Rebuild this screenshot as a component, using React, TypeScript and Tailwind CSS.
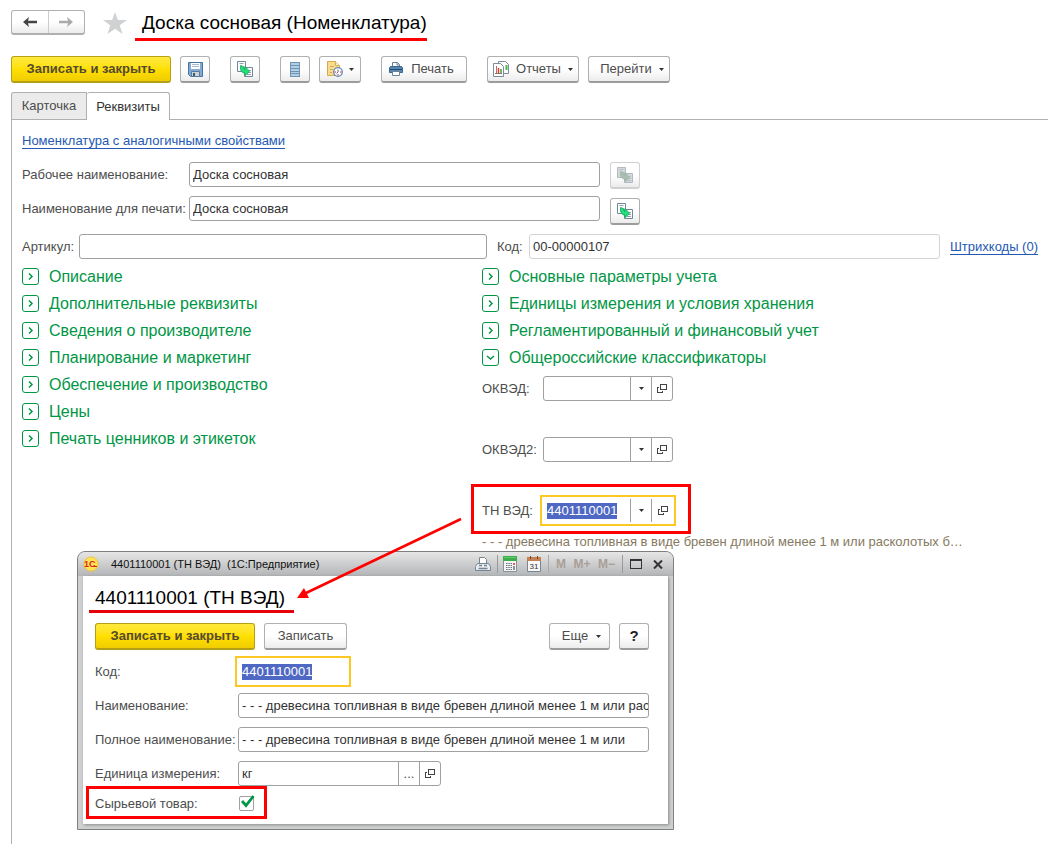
import { useState, type ReactNode } from "react";

const leftGroups = [
  "Описание",
  "Дополнительные реквизиты",
  "Сведения о производителе",
  "Планирование и маркетинг",
  "Обеспечение и производство",
  "Цены",
  "Печать ценников и этикеток",
];

const rightGroups = [
  "Основные параметры учета",
  "Единицы измерения и условия хранения",
  "Регламентированный и финансовый учет",
];

const inputClass =
  "h-[25px] min-w-0 rounded-[3px] border border-[#a0a0a0] bg-white pl-[3px] text-[#333] outline-none";

function Caret() {
  return (
    <svg width="5" height="3" viewBox="0 0 5 3" className="shrink-0">
      <path d="M0 0h5L2.500 3z" fill="#333" />
    </svg>
  );
}

function OpenIcon() {
  return (
    <svg width="10" height="10" viewBox="0 0 10 10" fill="none" stroke="#444" shapeRendering="crispEdges">
      <path d="M3.500.5h6v5h-6zM2 3.500H.5v5h5V7" />
    </svg>
  );
}

function ArrowIcon({ color, flip }: { color: string; flip?: boolean }) {
  return (
    <svg width="14" height="10" viewBox="0 0 14 10" className={flip ? "rotate-180" : ""}>
      <path d="M0 5l6-5-1 3.700h9v2.600H5L6 10z" fill={color} />
    </svg>
  );
}

function SaveIcon() {
  return (
    <svg width="15" height="15" viewBox="0 0 15 15">
      <path d="M.5.5h14v14h-12l-2-2z" fill="#83aad6" stroke="#4475a5" />
      <path d="M3 1h9v6H3z" fill="#fff" />
      <path d="M4 2.500h7M4 4.500h7" stroke="#a9bccb" />
      <path d="M3.500 9.500h8v5h-8z" fill="#cfd3d0" stroke="#557a9c" />
      <path d="M5 11h2v3H5z" fill="#35597c" />
    </svg>
  );
}

function CopyIcon({ muted }: { muted?: boolean }) {
  const line = muted ? "#b3babf" : "#74879a";
  const paper = muted ? "#d3d8db" : "#fff";
  return (
    <svg width="16" height="16" viewBox="0 0 16 16">
      <path d="M.5.5h8v10h-8z" fill={paper} stroke={line} />
      <path d="M7.500 6.500h8v9h-8z" fill={paper} stroke={line} />
      <path d="M2.500 2.500h4M11 9.500h3M11 11.500h3M10 13.500h4" stroke={line} strokeWidth=".8" />
      <path
        d="M3.500 4.500l3 1v2l1.500.8V5.500l4.500 4.700L8 14.800v-2.600c-3-.3-4.500-2.400-4.500-5z"
        fill={muted ? "#a9bfb2" : "#21df7b"}
        stroke={muted ? "#9eb3a7" : "#0ea655"}
        strokeWidth=".8"
      />
    </svg>
  );
}

function ListIcon() {
  return (
    <svg width="10" height="15" viewBox="0 0 10 15" shapeRendering="crispEdges">
      <path d="M0 0h10v15H0z" fill="#6f93b0" />
      <path d="M1 1h8v2H1zM1 4h8v2H1zM1 7h8v2H1zM1 10h8v1H1zM1 12h8v2H1z" fill="#b0cfe4" />
    </svg>
  );
}

function HistoryIcon() {
  return (
    <svg width="16" height="16" viewBox="0 0 16 16">
      <path d="M.5.5h8l4 4v10h-12z" fill="#f8dc8e" stroke="#d6ab50" />
      <path d="M8.500.5v4h4" fill="#fff0c4" stroke="#d6ab50" />
      <path d="M3 5.500h4M3 8.500h3M3 11.500h2" stroke="#d1aa58" />
      <circle cx="11" cy="11" r="4.300" fill="#fff" stroke="#5b8cc0" strokeWidth="1.300" />
      <path d="M11 8.500V11l-1.500 1.500" fill="none" stroke="#345" strokeWidth=".8" />
      <path d="M13 11h1.500M7.500 11H9M11 13v1.500" stroke="#e22" />
    </svg>
  );
}

function PrintIcon() {
  return (
    <svg width="14" height="14" viewBox="0 0 14 14">
      <path d="M3.500 5V.5h5l2 2V5" fill="#fff" stroke="#6e8293" />
      <path d="M8 .5v2.500h2.500" fill="none" stroke="#6e8293" />
      <path d="M1.500 4.500h11l1 1v5h-13v-5z" fill="#5585b0" stroke="#3b668d" />
      <path d="M1 7.500h12" stroke="#244a6c" />
      <path d="M3.500 9.500h7v4h-7z" fill="#fff" stroke="#6e8293" />
    </svg>
  );
}

function ReportIcon() {
  return (
    <svg width="16" height="16" viewBox="0 0 16 16">
      <path d="M5.500.5h7l3 3v9h-10z" fill="#fff" stroke="#7d8d9b" />
      <path d="M13.500 4v5" stroke="#4db34d" strokeWidth="2" />
      <path d="M.5 2.500h7l3 3v10H.5z" fill="#fff" stroke="#7d8d9b" />
      <path d="M3.500 5v7" stroke="#c66" />
      <path d="M5.500 7v5" stroke="#e33" strokeWidth="1.500" />
      <path d="M8 8v4" stroke="#3a3" strokeWidth="1.500" />
      <path d="M2 12.500h7" stroke="#777" />
    </svg>
  );
}

function Button({ className, disabled, label, children }: {
  className?: string;
  disabled?: boolean;
  label?: string;
  children: ReactNode;
}) {
  return (
    <button
      aria-label={label}
      disabled={disabled}
      className={`flex h-[27px] shrink-0 items-center justify-center rounded-[3px] border border-b-2 bg-linear-to-b from-white from-50% to-[#ececec] ${
        disabled ? "border-[#d0d0d0]" : "border-[#b0b0b0] border-b-[#9c9c9c]"
      } ${className ?? "w-[30px]"}`}
    >
      {children}
    </button>
  );
}

function PrimaryButton() {
  return (
    <button className="h-[27px] w-40 shrink-0 rounded-[3px] border border-b-2 border-[#b59f17] bg-linear-to-b from-[#ffe939] via-[#ffe000] to-[#f0cc00] font-bold text-[#554a30]">
      Записать и закрыть
    </button>
  );
}

function Group({ title, open }: { title: string; open?: boolean }) {
  return (
    <button aria-expanded={!!open} className="flex h-[27px] items-center gap-[10px] text-base text-[#009646]">
      <svg width="17" height="17" viewBox="0 0 17 17" fill="none" stroke="#009646">
        <rect x=".5" y=".5" width="16" height="16" rx="2.500" />
        {open ? (
          <path d="M5 7l3.500 3L12 7" strokeWidth="1.500" />
        ) : (
          <path d="M7 5.500l3 3-3 3" strokeWidth="1.500" />
        )}
      </svg>
      {title}
    </button>
  );
}

function PickerField({ id, label }: { id: string; label: string }) {
  return (
    <div className="flex h-[25px] items-center">
      <label htmlFor={id} className="w-[61px] shrink-0">{label}</label>
      <div className="flex h-[25px] w-[130px] rounded-[3px] border border-[#a0a0a0]">
        <input id={id} className="min-w-0 flex-1 px-[3px] outline-none" />
        <button aria-label="Выбрать" className="flex w-[21px] items-center justify-center border-l border-[#a0a0a0]">
          <Caret />
        </button>
        <button aria-label="Открыть" className="flex w-[21px] items-center justify-center border-l border-[#a0a0a0]">
          <OpenIcon />
        </button>
      </div>
    </div>
  );
}

function TitleBar() {
  return (
    <div className="flex h-6 items-center bg-linear-to-b from-[#e6e6e6] to-[#b4b5b7] pl-[5px] pr-[10px] text-[11px] text-[#111]">
      <svg width="16" height="16" viewBox="0 0 16 16" className="mr-3 shrink-0">
        <circle cx="8" cy="8" r="7" fill="#ffe45a" stroke="#f1c232" />
        <text x="1" y="11" fontSize="9" fontWeight="bold" fill="#d9231c">1С</text>
        <path d="M9 10.500h5" stroke="#d9231c" />
      </svg>
      <span className="flex-1 whitespace-pre">4401110001 (ТН ВЭД)  (1С:Предприятие)</span>
      <div className="flex items-center text-xs">
        <button aria-label="Печать" className="mr-[6px]">
          <svg width="16" height="15" viewBox="0 0 16 15">
            <path d="M4.500 7V.5h5l2 2V7" fill="#fff" stroke="#778591" />
            <path d="M2.500 6.500h11l2 3v4H.5v-4z" fill="#e8edf1" stroke="#778591" />
            <path d="M4 8.500h3M9 8.500h3M3.500 11.500h9" stroke="#778591" strokeWidth="1.500" />
          </svg>
        </button>
        <span className="mr-[5px] h-[18px] w-px bg-[#999]" />
        <button aria-label="Калькулятор" className="mr-[10px]">
          <svg width="14" height="16" viewBox="0 0 14 16">
            <path d="M.5.500h13v15H.5z" fill="#f4f4f4" stroke="#89919a" />
            <path d="M0 0h14v5H0z" fill="#3cae4b" />
            <path d="M1 1.500h12" stroke="#63c96f" />
            <path d="M3 7.500h6M3 9.500h6M3 11.500h6M3 13.500h6" stroke="#66727e" strokeDasharray="1.500 .8" />
            <path d="M11 7v2" stroke="#d33" strokeWidth="1.500" />
            <path d="M11 10v4" stroke="#66727e" strokeWidth="1.500" />
          </svg>
        </button>
        <button aria-label="Календарь" className="mr-[7px]">
          <svg width="14" height="16" viewBox="0 0 14 16">
            <path d="M.5 2.500h13v13H.5z" fill="#f8f8f8" stroke="#78858f" />
            <path d="M0 1h14v4H0z" fill="#c58153" />
            <path d="M3.500 0v3M10.500 0v3" stroke="#754629" />
            <text x="7" y="13" textAnchor="middle" fontSize="8" fill="#333">31</text>
          </svg>
        </button>
        <span className="h-[18px] w-px bg-[#aaa]" />
        <div className="flex w-[73px] items-center justify-between px-[7px] font-bold text-[#a99f98]">
          <button>M</button>
          <button>M+</button>
          <button>M−</button>
        </div>
        <span className="mr-[7px] h-[18px] w-px bg-[#999]" />
        <button aria-label="Развернуть" className="mr-[11px]">
          <svg width="12" height="10" viewBox="0 0 12 10" shapeRendering="crispEdges">
            <path d="M.5.5h11v9H.5zM0 1.500h12" fill="none" stroke="#333" />
          </svg>
        </button>
        <button aria-label="Закрыть">
          <svg width="10" height="9" viewBox="0 0 10 9">
            <path d="M1 .5l8 8M9 .5l-8 8" stroke="#333" strokeWidth="2" />
          </svg>
        </button>
      </div>
    </div>
  );
}

function CodeDialog() {
  const [raw, setRaw] = useState(true);

  return (
    <div
      role="dialog"
      className="absolute left-[77px] top-[551px] w-[597px] overflow-hidden rounded-t-lg border border-[#7f7f7f] bg-[#cfd0d1]"
    >
      <TitleBar />
      <div className="mx-[5px] mb-[5px] bg-white pb-[5px] pl-3 pr-[19px] shadow-[1px_1px_3px_#888]">
        <h2 className="-ml-[6px] w-fit border-b-3 border-[#e8000b] pl-[6px] pr-[9px] pt-[9px] text-[19px] leading-[25px] text-black">
          4401110001 (ТН ВЭД)
        </h2>
        <div className="mt-[10px] flex gap-[9px]">
          <PrimaryButton />
          <Button className="w-[83px]">Записать</Button>
          <Button className="ml-auto w-[61px] gap-2 pl-1">
            Еще <Caret />
          </Button>
          <Button className="w-[30px] text-[15px] font-bold text-[#222]">?</Button>
        </div>
        <div className="mt-[6px] flex items-center">
          <label htmlFor="dlg-code" className="w-[140px]">Код:</label>
          <div className="flex h-[31px] w-[116px] items-center border-2 border-[#fcc822] pl-[5px]">
            <input id="dlg-code" defaultValue="4401110001" className="field-sizing-content h-4 bg-[#4f68c4] text-white outline-none" />
          </div>
        </div>
        <div className="mt-[6px] flex items-center">
          <label htmlFor="dlg-name" className="w-[143px] shrink-0">Наименование:</label>
          <input id="dlg-name" className={`${inputClass} flex-1`} defaultValue="- - - древесина топливная в виде бревен длиной менее 1 м или рас" />
        </div>
        <div className="mt-[9px] flex items-center">
          <label htmlFor="dlg-full" className="w-[143px] shrink-0">Полное наименование:</label>
          <input id="dlg-full" className={`${inputClass} flex-1`} defaultValue="- - - древесина топливная в виде бревен длиной менее 1 м или" />
        </div>
        <div className="mt-[9px] flex items-center">
          <label htmlFor="dlg-unit" className="w-[143px] shrink-0">Единица измерения:</label>
          <div className="flex h-[25px] w-[203px] rounded-[3px] border border-[#a0a0a0]">
            <input id="dlg-unit" defaultValue="кг" className="min-w-0 flex-1 px-[3px] text-[#333] outline-none" />
            <button className="w-[21px] border-l border-[#a0a0a0]">...</button>
            <button aria-label="Открыть" className="flex w-[21px] items-center justify-center border-l border-[#a0a0a0]">
              <OpenIcon />
            </button>
          </div>
        </div>
        <div className="-ml-[9px] flex h-[33px] w-[181px] items-center border-3 border-[#f00] pl-[6px] pt-[2px]">
          <label htmlFor="dlg-raw" className="w-36">Сырьевой товар:</label>
          <div className="relative h-[15px] w-[15px]">
            <input
              id="dlg-raw"
              type="checkbox"
              checked={raw}
              onChange={(e) => setRaw(e.target.checked)}
              className="block h-[15px] w-[15px] appearance-none rounded-[2px] border border-[#a0a0a0] bg-white"
            />
            {raw && (
              <svg width="14" height="13" viewBox="0 0 14 13" className="pointer-events-none absolute -top-px left-[2px]">
                <path d="M1 6l4 4.500L12.500 1" fill="none" stroke="#009646" strokeWidth="2.800" />
              </svg>
            )}
          </div>
        </div>
      </div>
    </div>
  );
}

export default function App() {
  return (
    <div className="relative flex min-h-screen flex-col overflow-hidden bg-white font-['Liberation_Sans',Arial,sans-serif] text-[13px] leading-4 text-[#4d4d4d]">
      <header className="flex items-start pl-[11px] pt-[10px]">
        <div className="flex h-[25px] w-[74px] rounded-[3px] border border-b-2 border-[#b0b0b0] bg-linear-to-b from-white from-50% to-[#ececec]">
          <button aria-label="Назад" className="flex flex-1 items-center justify-center border-r border-[#ccc]">
            <ArrowIcon color="#444" />
          </button>
          <button aria-label="Вперед" className="flex flex-1 items-center justify-center">
            <ArrowIcon color="#aaa" flip />
          </button>
        </div>
        <button aria-label="Избранное" className="ml-[18px] mt-[2px]">
          <svg width="24" height="22" viewBox="0 0 24 22">
            <path d="M12 0l2.900 8H24l-7.200 5.200L19.500 22 12 16.700 4.500 22l2.700-8.800L0 8h9.100z" fill="#cfd1d3" />
          </svg>
        </button>
        <h1 className="ml-2 border-b-3 border-[#f00] pb-[3px] pl-[7px] text-[19px] leading-[25px] text-black">
          Доска сосновая (Номенклатура)
        </h1>
      </header>

      <div className="mt-[15px] flex pl-[11px]">
        <PrimaryButton />
        <div className="ml-[9px] flex gap-5">
          <Button label="Записать"><SaveIcon /></Button>
          <Button label="Создать копированием"><CopyIcon /></Button>
          <div className="flex gap-[9px]">
            <Button label="Список"><ListIcon /></Button>
            <Button label="История" className="w-[42px] gap-[6px]"><HistoryIcon /><Caret /></Button>
          </div>
          <Button className="w-[86px] gap-2 pr-[5px]"><PrintIcon />Печать</Button>
          <div className="flex gap-[9px]">
            <Button className="w-[92px] gap-[7px]"><ReportIcon />Отчеты<Caret /></Button>
            <Button className="w-[82px] gap-[7px] pl-[6px]">Перейти<Caret /></Button>
          </div>
        </div>
      </div>

      <div role="tablist" className="mt-[9px] flex pl-[11px]">
        <button role="tab" className="h-[27px] w-[76px] rounded-tl-[3px] border border-b-0 border-[#b0b0b0] bg-[#ebebeb]">
          Карточка
        </button>
        <button role="tab" aria-selected="true" className="z-10 -mb-px h-7 w-[83px] rounded-t-[3px] border border-b-0 border-l-0 border-[#b0b0b0] bg-white text-[#333]">
          Реквизиты
        </button>
      </div>

      <main className="ml-[11px] flex-1 border-l border-t border-[#b0b0b0] pl-[10px] pr-[10px] pt-[13px]">
        <a href="#similar" className="inline-block border-b border-[#2459b5] leading-[15px] text-[#2459b5]">
          Номенклатура с аналогичными свойствами
        </a>

        <div className="mt-[13px] flex gap-[10px]">
          <div className="flex max-w-[578px] flex-1 flex-col gap-[9px]">
            <div className="flex items-center">
              <label htmlFor="work-name" className="w-[167px] shrink-0">Рабочее наименование:</label>
              <input id="work-name" className={`${inputClass} flex-1`} defaultValue="Доска сосновая" />
            </div>
            <div className="flex items-center">
              <label htmlFor="print-name" className="w-[167px] shrink-0">Наименование для печати:</label>
              <input id="print-name" className={`${inputClass} flex-1`} defaultValue="Доска сосновая" />
            </div>
          </div>
          <div className="flex flex-col gap-[9px]">
            <Button label="Заполнить рабочее наименование" disabled><CopyIcon muted /></Button>
            <Button label="Заполнить наименование для печати"><CopyIcon /></Button>
          </div>
        </div>

        <div className="mt-[9px] flex items-center">
          <label htmlFor="article" className="w-[57px] shrink-0">Артикул:</label>
          <input id="article" className={`${inputClass} flex-1`} />
          <label htmlFor="code" className="ml-[10px] w-8 shrink-0">Код:</label>
          <input id="code" readOnly defaultValue="00-00000107" className="h-[25px] min-w-0 flex-1 rounded-[3px] border border-[#d4d4d4] px-[3px] text-[#333] outline-none" />
          <a href="#barcodes" className="ml-[10px] border-b border-[#2459b5] leading-[15px] text-[#2459b5]">
            Штрихкоды (0)
          </a>
        </div>

        <div className="mt-1 flex">
          <div className="flex w-[460px] shrink-0 flex-col items-start">
            {leftGroups.map((title) => (
              <Group key={title} title={title} />
            ))}
          </div>
          <div className="flex flex-col items-start">
            {rightGroups.map((title) => (
              <Group key={title} title={title} />
            ))}
            <Group title="Общероссийские классификаторы" open />
            <div className="mt-[5px] flex flex-col gap-9">
              <PickerField id="okved" label="ОКВЭД:" />
              <PickerField id="okved2" label="ОКВЭД2:" />
            </div>
            <div className="-ml-[11px] mt-[22px] flex h-[50px] w-[220px] items-end border-3 border-[#f00] pb-[5px] pl-2">
              <label htmlFor="tnved" className="w-[58px] shrink-0 leading-[31px]">ТН ВЭД:</label>
              <div className="flex h-[31px] w-[136px] items-center border-2 border-[#fcc822] pl-[5px]">
                <input id="tnved" defaultValue="4401110001" className="field-sizing-content h-4 bg-[#4f68c4] text-white outline-none" />
                <button aria-label="Выбрать" className="ml-auto flex h-[23px] w-[21px] items-center justify-center border-l border-[#a0a0a0]">
                  <Caret />
                </button>
                <button aria-label="Открыть" className="flex h-[23px] w-[23px] items-center justify-center border-l border-[#a0a0a0]">
                  <OpenIcon />
                </button>
              </div>
            </div>
            <p className="text-[#857a5f]">- - - древесина топливная в виде бревен длиной менее 1 м или расколотых б…</p>
          </div>
        </div>
      </main>

      <CodeDialog />

      {/* pointer from the code field to the dialog heading */}
      <svg width="174" height="90" viewBox="0 0 174 90" className="pointer-events-none absolute left-[290px] top-[512px]">
        <path d="M171 7L16 81" stroke="#f00" strokeWidth="2.500" />
        <path d="M7 86l7-10 5 10z" fill="#f00" />
      </svg>
    </div>
  );
}
